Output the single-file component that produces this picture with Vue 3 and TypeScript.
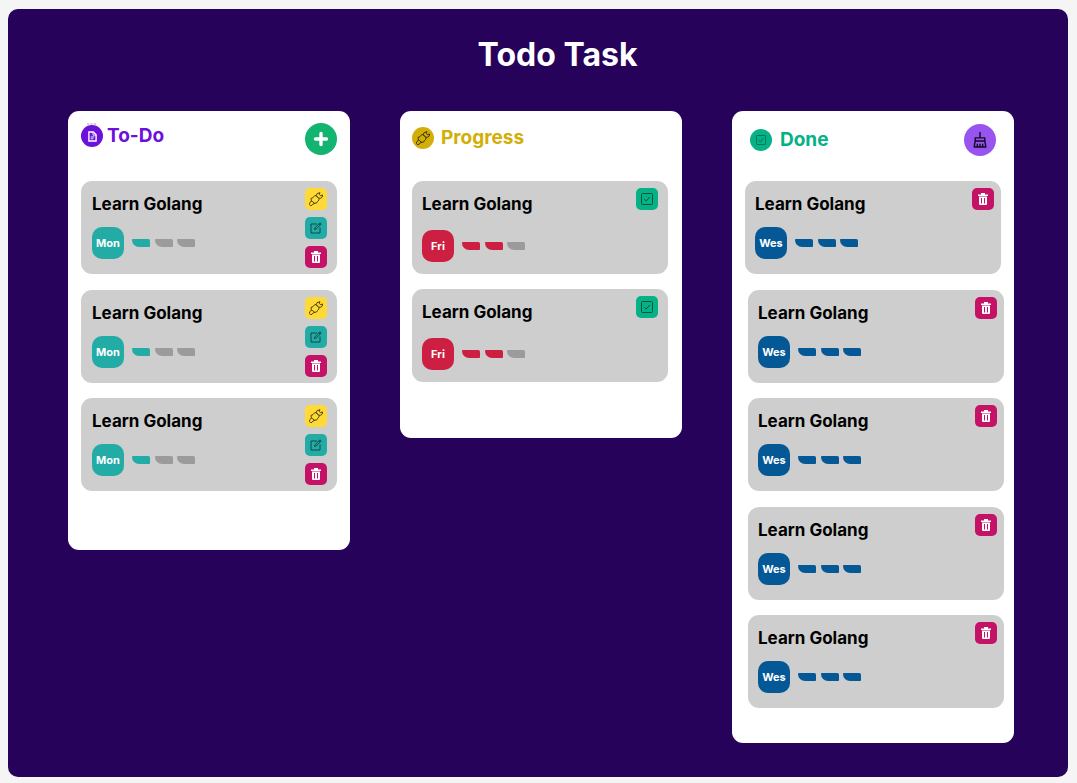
<script setup lang="ts">
import { ref } from 'vue'

type ColumnId = 'todo' | 'progress' | 'done'

interface Task {
  id: number
  title: string
  day: string
  level: number
}

interface Column {
  id: ColumnId
  title: string
  tasks: Task[]
}

const makeTasks = (count: number, day: string, level: number, start: number): Task[] =>
  Array.from({ length: count }, (_, i) => ({ id: start + i, title: 'Learn Golang', day, level }))

const columns = ref<Column[]>([
  { id: 'todo', title: 'To-Do', tasks: makeTasks(3, 'Mon', 1, 1) },
  { id: 'progress', title: 'Progress', tasks: makeTasks(2, 'Fri', 2, 11) },
  { id: 'done', title: 'Done', tasks: makeTasks(5, 'Wes', 3, 21) },
])

let nextId = 100

function addTask() {
  columns.value[0].tasks.push({ id: nextId++, title: 'Learn Golang', day: 'Mon', level: 1 })
}

function clearDone() {
  columns.value[2].tasks = []
}

function removeTask(column: Column, task: Task) {
  column.tasks = column.tasks.filter((t) => t.id !== task.id)
}

function advance(index: number, task: Task) {
  removeTask(columns.value[index], task)
  const day = index === 0 ? 'Fri' : 'Wes'
  columns.value[index + 1].tasks.push({ ...task, day, level: index + 2 })
}
</script>

<template>
  <svg class="symbols" aria-hidden="true">
    <symbol id="icon-plug" viewBox="0 0 42 42">
      <g fill="none" stroke="currentColor" stroke-width="2.6" stroke-linejoin="round" stroke-linecap="round">
        <path d="M7 19 L12 17 L17 11 L21 11 L30 20 L30 24 L25 29 L23 33 L17 34 L8 27 Z" />
        <path d="M8 27 L3 31 L1 37 L4 41 L9 40 L12 36 L17 34" />
        <path d="M25 15 L22 10 L24 5 L33 2 L31 7 L34 11 L41 9 L39 16 L34 19 L29 18" />
      </g>
    </symbol>
    <symbol id="icon-edit" viewBox="0 0 24 24">
      <g fill="none" stroke="currentColor" stroke-width="1.8" stroke-linejoin="round">
        <path d="M14 4 H2 V22 H20 V11" />
        <path d="M9 15 L10 11.5 L20 1.5 L22.5 4 L12.5 14 Z M18 3.5 L20.5 6" />
      </g>
    </symbol>
    <symbol id="icon-trash" viewBox="0 0 20 24">
      <path fill="currentColor" d="M6 0 H14 V3 H20 V6 H0 V3 H6 Z" />
      <path
        fill="currentColor"
        fill-rule="evenodd"
        d="M2 7 H18 V22 Q18 24 16 24 H4 Q2 24 2 22 Z M6 10 V21 H8 V10 Z M12 10 V21 H14 V10 Z"
      />
    </symbol>
    <symbol id="icon-check" viewBox="0 0 24 24">
      <g fill="none" stroke="currentColor" stroke-width="2" stroke-linejoin="round">
        <rect x="1" y="1" width="22" height="22" rx="2" />
        <path d="M6.5 12.5 L10.5 16 L17.5 8" />
      </g>
    </symbol>
    <symbol id="icon-note" viewBox="0 0 20 24">
      <g fill="none" stroke="currentColor" stroke-width="3">
        <path d="M2 2 H12 L18 8 V22 H2 Z" />
        <path d="M11 3 V9 H18" stroke-width="2" />
        <path d="M6 13 H14 M6 17 H12" stroke-width="2" />
      </g>
    </symbol>
    <symbol id="icon-broom" viewBox="0 0 26 30">
      <g fill="none" stroke="currentColor" stroke-width="2.6" stroke-linejoin="round">
        <path d="M13 0 V11" />
        <path d="M4 17 V11 H22 V17 Z" />
        <path d="M4 17 L2 28 H24 L22 17 M8 28 V22 M13 28 V22 M18 28 V22" />
      </g>
    </symbol>
    <symbol id="icon-plus" viewBox="0 0 16 16">
      <path d="M8 2.5 V13.5 M2.5 8 H13.5" stroke="currentColor" stroke-width="3.4" stroke-linecap="round" />
    </symbol>
  </svg>

  <main class="board">
    <h1>Todo Task</h1>
    <div class="columns">
      <section v-for="(column, index) in columns" :key="column.id" class="column" :class="column.id">
        <header>
          <span class="emblem">
            <svg v-if="column.id === 'todo'" class="crown" viewBox="0 0 9 3" aria-hidden="true">
              <path d="M0 0 L1 2 L2 0 M3.5 0 L4.5 2 L5.5 0 M7 0 L8 2 L9 0" />
            </svg>
            <svg v-if="column.id === 'todo'" class="note" aria-hidden="true"><use href="#icon-note" /></svg>
            <svg v-else-if="column.id === 'progress'" class="plug" aria-hidden="true"><use href="#icon-plug" /></svg>
            <svg v-else class="check" aria-hidden="true"><use href="#icon-check" /></svg>
          </span>
          <h2>{{ column.title }}</h2>
          <button v-if="column.id === 'todo'" class="round add" type="button" aria-label="Add task" @click="addTask">
            <svg aria-hidden="true"><use href="#icon-plus" /></svg>
          </button>
          <button v-if="column.id === 'done'" class="round clear" type="button" aria-label="Clear done tasks" @click="clearDone">
            <svg aria-hidden="true"><use href="#icon-broom" /></svg>
          </button>
        </header>
        <ul class="tasks">
          <li v-for="task in column.tasks" :key="task.id" class="card">
            <div class="info">
              <h3>{{ task.title }}</h3>
              <div class="meta">
                <span class="day">{{ task.day }}</span>
                <span class="level">
                  <i v-for="n in 3" :key="n" :class="{ on: n <= task.level }"></i>
                </span>
              </div>
            </div>
            <div class="actions">
              <button v-if="column.id === 'todo'" class="start" type="button" aria-label="Start task" @click="advance(index, task)">
                <svg aria-hidden="true"><use href="#icon-plug" /></svg>
              </button>
              <button v-if="column.id === 'todo'" class="edit" type="button" aria-label="Edit task">
                <svg aria-hidden="true"><use href="#icon-edit" /></svg>
              </button>
              <button v-if="column.id === 'progress'" class="finish" type="button" aria-label="Finish task" @click="advance(index, task)">
                <svg aria-hidden="true"><use href="#icon-check" /></svg>
              </button>
              <button v-if="column.id !== 'progress'" class="delete" type="button" aria-label="Delete task" @click="removeTask(column, task)">
                <svg aria-hidden="true"><use href="#icon-trash" /></svg>
              </button>
            </div>
          </li>
        </ul>
      </section>
    </div>
  </main>
</template>

<style>
body {
  margin: 0;
  background: #f5f5f5;
}
#app {
  display: flow-root;
}
</style>

<style scoped>
* {
  box-sizing: border-box;
}
.symbols {
  position: absolute;
  width: 0;
  height: 0;
}
.board {
  margin: 9px 9px 6px 8px;
  padding: 26px 54px 34px 60px;
  border-radius: 10px;
  background: #26025a;
  font-family: Inter, 'Liberation Sans', sans-serif;
}
h1,
h2,
h3 {
  margin: 0;
  font-weight: 700;
}
h1 {
  padding-left: 33px;
  color: #fff;
  font-size: 32px;
  line-height: 40px;
  text-align: center;
}
.columns {
  display: grid;
  grid-template-columns: repeat(3, minmax(0, 1fr));
  align-items: start;
  gap: 50px;
  margin-top: 36px;
}
.column {
  display: flex;
  flex-direction: column;
  border-radius: 11px;
  background: #fff;
}
.todo {
  --accent: #6a11dc;
  --tint: #22aca5;
  min-height: 439px;
  padding: 0 13px 59px;
}
.progress {
  --accent: #d3ae06;
  --tint: #cc1f41;
  min-height: 327px;
  padding: 0 14px 56px 12px;
}
.done {
  --accent: #04b286;
  --tint: #035895;
  min-height: 632px;
  padding: 0 10px 35px 16px;
}
header {
  display: flex;
  align-items: flex-start;
  height: 70px;
  padding-top: 12px;
}
.emblem {
  position: relative;
  display: grid;
  place-items: center;
  flex: none;
  width: 22px;
  height: 22px;
  margin-top: 2px;
  border-radius: 50%;
  background: var(--accent);
}
.note {
  width: 9px;
  height: 11px;
  color: #fff;
}
.plug {
  width: 14px;
  height: 14px;
  color: #2b2503;
}
.check {
  width: 10px;
  height: 10px;
  color: #06634c;
}
.crown {
  position: absolute;
  top: -2px;
  left: 6px;
  width: 9px;
  height: 3px;
  fill: none;
  stroke: #8a8a8a;
  stroke-width: 0.5;
}
h2 {
  margin-left: 4px;
  color: var(--accent);
  font-size: 19px;
  line-height: 26px;
}
.progress header {
  padding-top: 14px;
}
.progress h2 {
  margin-left: 7px;
}
.done header {
  padding: 13px 8px 0 2px;
}
.done .emblem {
  margin-top: 5px;
}
.done h2 {
  margin-top: 3px;
  margin-left: 8px;
}
button {
  display: grid;
  place-items: center;
  padding: 0;
  border: 0;
  cursor: pointer;
}
.round {
  width: 32px;
  height: 32px;
  margin-left: auto;
  border-radius: 50%;
}
.add {
  background: #13b370;
  color: #fff;
}
.add svg {
  width: 16px;
  height: 16px;
}
.clear {
  background: #9854ef;
  color: #12071f;
}
.clear svg {
  width: 14px;
  height: 16px;
}
.tasks {
  display: flex;
  flex: 1;
  flex-direction: column;
  justify-content: space-between;
  gap: 15px;
  margin: 0;
  padding: 0;
  list-style: none;
}
.card {
  display: flex;
  justify-content: space-between;
  height: 93px;
  padding: 7px 10px 0 11px;
  border-radius: 11px;
  background: #cecece;
}
.progress .card,
.done .card {
  padding-left: 10px;
}
.done .card {
  padding-right: 7px;
}
.done .card:first-child {
  margin-right: 3px;
  margin-left: -3px;
}
h3 {
  margin-top: 4px;
  color: #000;
  font-size: 17px;
  line-height: 24px;
}
.meta {
  display: flex;
  align-items: center;
  gap: 8px;
  margin-top: 11px;
}
.progress .meta {
  margin-top: 14px;
}
.day {
  width: 32px;
  border-radius: 10px;
  background: var(--tint);
  color: #fff;
  font-size: 11px;
  font-weight: 700;
  line-height: 32px;
  text-align: center;
}
.level {
  display: flex;
  justify-content: space-between;
  width: 63px;
}
.level i {
  width: 18px;
  height: 8px;
  border-radius: 1px 2px 1px 8px;
  background: #9b9b9b;
}
.level i.on {
  background: var(--tint);
}
.actions {
  display: flex;
  flex-direction: column;
  gap: 7px;
}
.actions button {
  width: 22px;
  height: 22px;
  border-radius: 5px;
}
.actions svg {
  width: 12px;
  height: 12px;
}
.actions .start {
  background: #ffda36;
  color: #3a3108;
}
.actions .start svg {
  width: 14px;
  height: 14px;
}
.actions .edit {
  background: #22aca5;
  color: #0b3f3c;
}
.actions .finish {
  background: #04b286;
  color: #06503e;
}
.actions .delete {
  background: #c41367;
  color: #fff;
}
.actions .delete svg {
  width: 10px;
  height: 12px;
}
</style>
